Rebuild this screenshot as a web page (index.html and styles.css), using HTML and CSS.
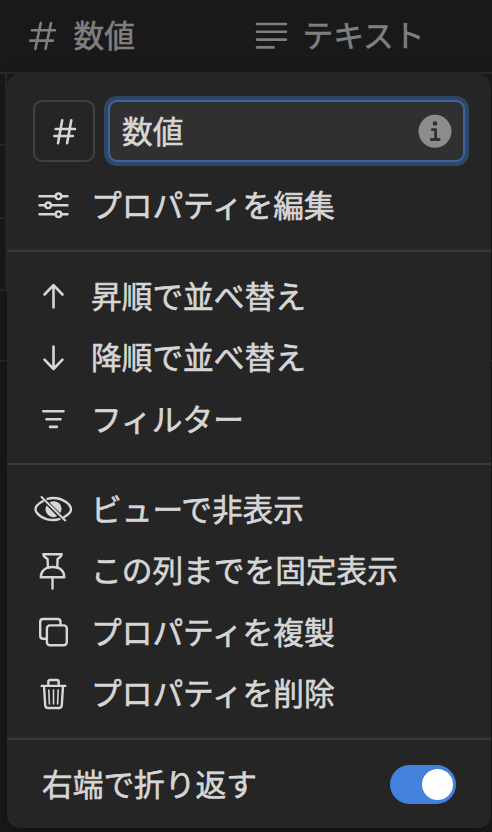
FILE: index.html
```html
<!DOCTYPE html>
<html lang="ja">
<head>
<meta charset="utf-8">
<title>プロパティ</title>
<link rel="stylesheet" href="styles.css">
</head>
<body>
<header class="columns">
  <div class="column">
    <svg class="column-icon" width="36" height="36" viewBox="0 0 36 36"><path d="M16.800 6 11.300 32M27 6 21.500 32M8 13.300H31M6.200 23.600H29"/></svg>
    <span>数値</span>
  </div>
  <div class="column">
    <svg class="column-icon" width="36" height="36" viewBox="0 0 36 36"><path d="M4 7H33M4 14.800H33M4 22.600H33M4 30.400H20.500"/></svg>
    <span>テキスト</span>
  </div>
</header>
<main class="table">
  <div class="cell"></div><div class="cell cell-tall"></div><div class="cell"></div><div class="footer-cell"></div>
  <div class="menu">
    <section class="group group-name">
      <div class="name-row">
        <button class="type-button"><svg width="40" height="40" viewBox="0 0 40 40"><path d="M18.200 9.200 14 32.200M27.300 9.200 23.100 32.200M11.700 18H31M10.400 25H28.900"/></svg></button>
        <div class="name-input">
          <span>数値</span>
          <svg class="info" width="34" height="34" viewBox="0 0 34 34"><circle class="info-disc" cx="17" cy="17.300" r="16.500"/><circle class="info-dot" cx="17" cy="9.500" r="2.300"/><path class="info-stem" d="M14.300 15.700H17.600V25M13.200 25.500H21.200"/></svg>
        </div>
      </div>
      <div class="item">
        <svg class="icon" viewBox="0 0 40 40"><path d="M6.500 10.300H22.500M28.500 10.300H34.500M6.500 19.300H12M18 19.300H34.500M6.500 28.200H22.500M28.500 28.200H34.500"/><circle cx="25.500" cy="10.300" r="2.800"/><circle cx="15.100" cy="19.300" r="2.800"/><circle cx="25.500" cy="28.200" r="2.800"/></svg>
        <span>プロパティを編集</span>
      </div>
    </section>
    <section class="group">
      <div class="item">
        <svg class="icon arrow" viewBox="0 0 40 40"><path d="M20.500 31.500V9.200M11.500 18.500 20.500 9.200 29.500 18.500"/></svg>
        <span>昇順で並べ替え</span>
      </div>
      <div class="item">
        <svg class="icon arrow" viewBox="0 0 40 40"><path d="M20.500 8.500V31M11.500 21.700 20.500 31 29.500 21.700"/></svg>
        <span>降順で並べ替え</span>
      </div>
      <div class="item">
        <svg class="icon arrow" viewBox="0 0 40 40"><path d="M10.300 12.300H30.500M13.500 20.200H27.500M17 27.900H23.800"/></svg>
        <span>フィルター</span>
      </div>
    </section>
    <section class="group">
      <div class="item">
        <svg class="icon" viewBox="0 0 40 40">
          <path d="M9.700 12.300C5.600 14.500 2.500 18 2.500 20.300C2.500 24.300 10 31 20.300 31C22.500 31 24.500 30.700 26.300 30.200M14.500 9.800C16.300 9.300 18.300 9 20.300 9C30.600 9 38 16 38 20.300C38 22.500 35.200 25.800 31.200 28"/>
          <path class="solid" d="M13.700 16.600A7.600 7.600 0 0 0 24.100 27ZM16.500 13.600A7.600 7.600 0 0 1 27.200 24.100Z"/>
          <path class="slash" d="M8.500 8 32.200 31.500"/>
        </svg>
        <span>ビューで非表示</span>
      </div>
      <div class="item">
        <svg class="icon" viewBox="0 0 40 40"><path d="M10.300 3.200H28.700C28.700 5.600 26.700 6.500 24.600 8L24.300 16.300C28.500 18 31.300 21 31.300 26.300H7.800C7.800 21 10.700 18 14.900 16.300L14.600 8C12.300 6.500 10.300 5.600 10.300 3.200ZM14.900 16.800C18 15.800 21.200 15.800 24.300 16.800M19.500 26.500V37.500"/></svg>
        <span>この列までを固定表示</span>
      </div>
      <div class="item">
        <svg class="icon" viewBox="0 0 40 40"><path d="M13.500 26.700H10.200Q7.200 26.700 7.200 23.700V10Q7.200 7 10.200 7H24.500Q27.500 7 27.500 10V13"/><rect x="13.900" y="13.400" width="19.900" height="19.900" rx="3"/></svg>
        <span>プロパティを複製</span>
      </div>
      <div class="item">
        <svg class="icon" viewBox="0 0 40 40"><path d="M8.700 11.900H32.300M15.300 11.700V8Q15.300 6 17.300 6H23.700Q25.700 6 25.700 8V11.700M11 12 12.200 31.200Q12.400 34 15 34H26Q28.600 34 28.800 31.200L30 12"/><path class="fine" d="M15.800 16 16.400 30M20.500 16V30M25.200 16 24.600 30"/></svg>
        <span>プロパティを削除</span>
      </div>
    </section>
    <section class="group group-wrap">
      <span>右端で折り返す</span>
      <div class="toggle"><div class="knob"></div></div>
    </section>
  </div>
</main>
</body>
</html>
```
FILE: styles.css
```css
* { box-sizing: border-box; }

body {
  margin: 0;
  height: 832px;
  overflow: hidden;
  background: #191919;
  color: #d6d6d6;
  font-family: "Noto Sans CJK JP", sans-serif;
  font-size: 30.7px;
  line-height: 40px;
  -webkit-text-stroke: 0.6px currentColor;
}

span { padding-bottom: 3px; }

svg {
  display: block;
  flex: none;
  fill: none;
  stroke: currentColor;
  stroke-width: 2.4;
  stroke-linecap: round;
  stroke-linejoin: round;
}

.columns {
  display: grid;
  grid-template-columns: 229px 1fr;
  height: 74px;
  padding: 0 0 2px 24px;
  border-bottom: 2px solid #292929;
  color: #7f7f7f;
}

.column {
  display: flex;
  align-items: center;
  gap: 13.5px;
}

.column-icon { stroke-width: 2.6; }

.table {
  position: relative;
  height: 758px;
}

.cell {
  width: 7px;
  height: 72px;
  border-right: 2px solid #292929;
  border-bottom: 2px solid #292929;
}

.cell-tall { height: 73px; }

.footer-cell {
  height: 71px;
  border-bottom: 2px solid #292929;
}

.menu {
  position: absolute;
  top: 0;
  left: 7px;
  width: 484px;
  height: 754px;
  border-radius: 13px;
  background: #252525;
  box-shadow: 0 4px 18px rgba(0, 0, 0, 0.3);
}

.group {
  padding: 13.5px 26px 13px;
  border-bottom: 2px solid #393939;
}

.group-name {
  height: 178px;
  padding-top: 26px;
}

.name-row {
  display: flex;
  gap: 13px;
  margin-bottom: 13px;
}

.type-button {
  display: flex;
  align-items: center;
  justify-content: center;
  width: 62px;
  height: 62px;
  padding: 0;
  border: 2px solid #414141;
  border-radius: 9px;
  background: transparent;
  color: #d6d6d6;
}

.type-button svg { stroke-width: 2.6; }

.name-input {
  display: flex;
  align-items: center;
  justify-content: space-between;
  width: 357px;
  height: 62px;
  padding: 0 11.5px 0 12px;
  border: 2px solid #3c659f;
  border-radius: 9px;
  background: #303030;
  box-shadow: 0 0 0 4px #304665;
}

.info-disc { fill: #8c8c8c; stroke: none; }
.info-dot { fill: #303030; stroke: none; }
.info-stem { stroke: #303030; stroke-width: 2.8; }

.item {
  display: flex;
  align-items: center;
  gap: 18px;
  height: 61.5px;
  white-space: nowrap;
}

.icon {
  width: 40px;
  height: 40px;
}

.arrow { stroke-width: 2.6; }
.fine { stroke-width: 1.6; }
.slash { stroke-width: 2; }
.solid { fill: currentColor; stroke: none; }

.group-wrap {
  display: flex;
  align-items: center;
  justify-content: space-between;
  height: 88px;
  padding: 2px 35px 0;
  border: 0;
}

.toggle {
  display: flex;
  align-items: center;
  justify-content: flex-end;
  width: 66px;
  height: 39px;
  padding-right: 3.5px;
  border-radius: 20px;
  background: #4281dc;
}

.knob {
  width: 31px;
  height: 31px;
  border-radius: 50%;
  background: #fff;
}
```
